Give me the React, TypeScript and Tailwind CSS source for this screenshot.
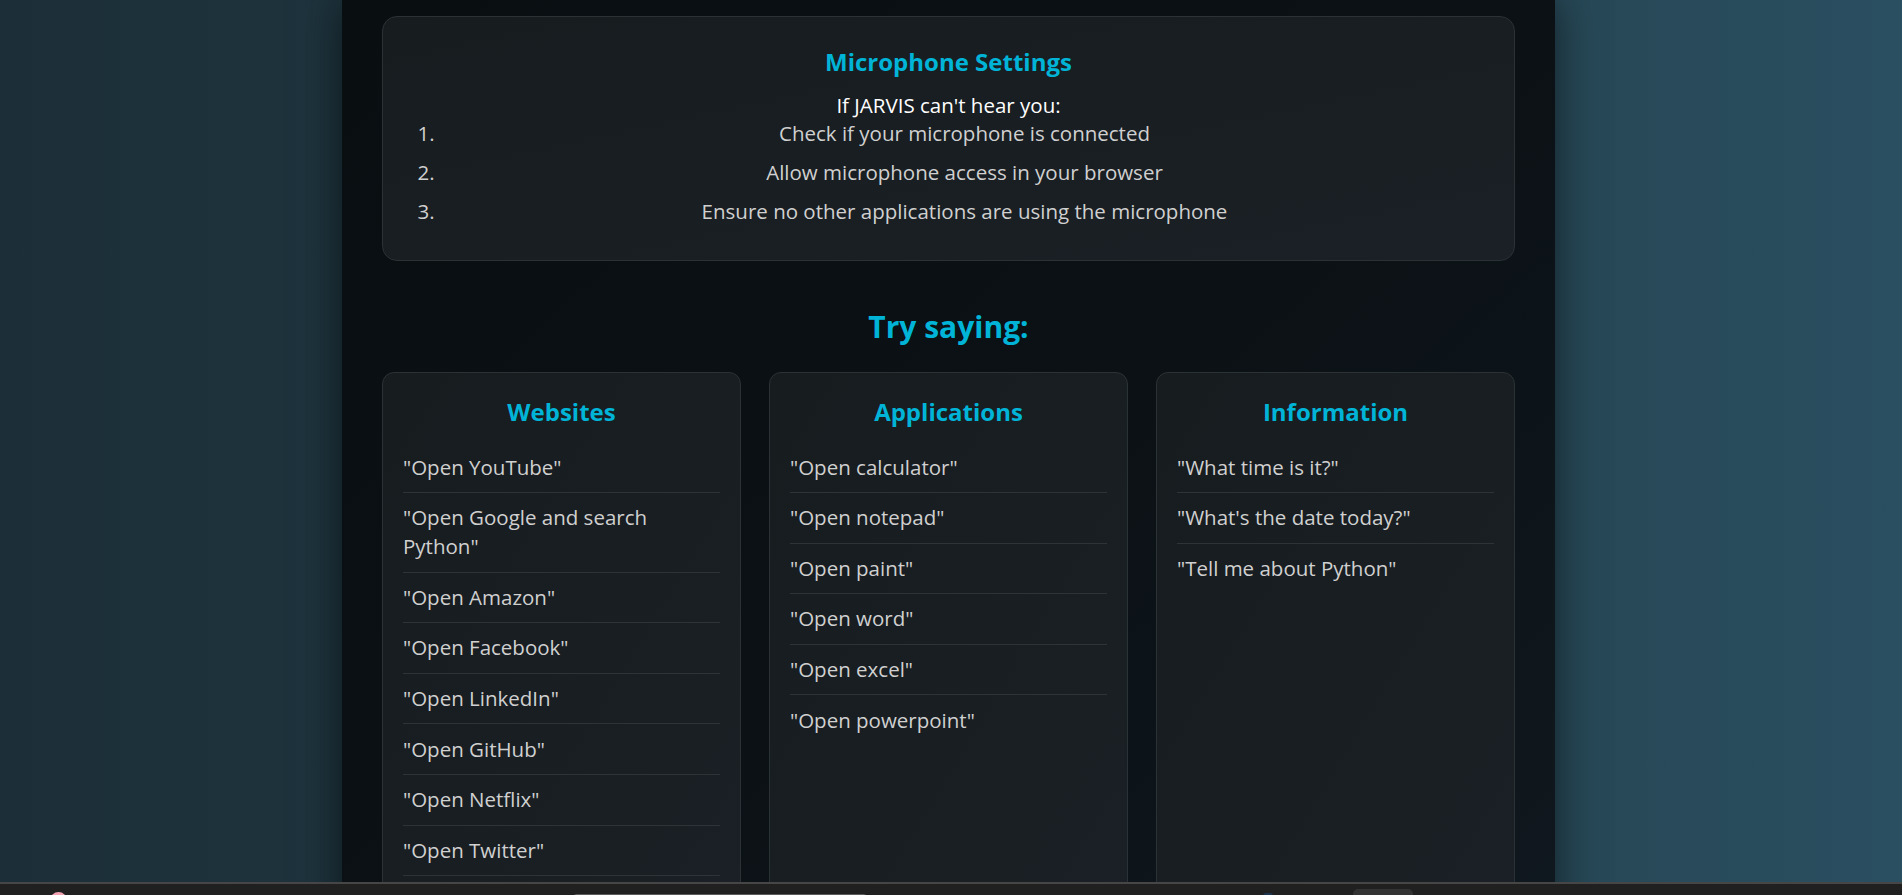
import React from 'react';

const font = { fontFamily: '"Open Sans", "Noto Sans", sans-serif' };

const groups = [
  {
    title: 'Websites',
    more: true,
    items: [
      '"Open YouTube"',
      '"Open Google and search Python"',
      '"Open Amazon"',
      '"Open Facebook"',
      '"Open LinkedIn"',
      '"Open GitHub"',
      '"Open Netflix"',
      '"Open Twitter"',
    ],
  },
  {
    title: 'Applications',
    more: false,
    items: [
      '"Open calculator"',
      '"Open notepad"',
      '"Open paint"',
      '"Open word"',
      '"Open excel"',
      '"Open powerpoint"',
    ],
  },
  {
    title: 'Information',
    more: false,
    items: ['"What time is it?"', '"What\'s the date today?"', '"Tell me about Python"'],
  },
];

const steps = [
  'Check if your microphone is connected',
  'Allow microphone access in your browser',
  'Ensure no other applications are using the microphone',
];

function CommandCard({ title, items, more }: { title: string; items: string[]; more: boolean }) {
  return (
    <div className="rounded-[12px] border border-[#2b3236] bg-gradient-to-br from-[#171c1f] to-[#1a2025] px-[20px] pt-[21px] pb-[20px]">
      <h3 className="text-center text-[24px] font-bold leading-[36px] text-[#00b4d8] mb-[12px]">{title}</h3>
      <ul>
        {items.map((item, i) => (
          <li
            key={item}
            className={
              'py-[10.3px] text-[20.5px] leading-[29px] text-[#d0d0d0] ' +
              (more || i < items.length - 1 ? 'border-b border-[#2d3337]' : '')
            }
          >
            {item}
          </li>
        ))}
      </ul>
      {more && <div className="h-[60px]" />}
    </div>
  );
}

export default function App() {
  return (
    <div
      className="relative h-screen w-full overflow-hidden bg-gradient-to-r from-[#1c2f38] via-[#213a45] to-[#2a4f60]"
      style={font}
    >
      {/* main panel */}
      <div className="ml-[342px] min-h-[1100px] w-[1213px] bg-gradient-to-br from-[#090e11] via-[#0b1115] to-[#111a21] px-[40px] pt-[16px] shadow-[0_0_40px_rgba(0,0,0,0.55)]">
        {/* mic settings */}
        <div className="rounded-[15px] border border-[#2b3236] bg-gradient-to-br from-[#171c1f] to-[#1a2025] px-[25px] pt-[25px] pb-[25px]">
          <h3 className="text-center text-[24px] font-bold leading-[40px] text-[#00b4d8] mb-[9px]">
            Microphone Settings
          </h3>
          <p className="text-center text-[20.5px] leading-[28px] text-white">If JARVIS can't hear you:</p>
          <ol className="list-decimal pl-[32px]">
            {steps.map((s) => (
              <li key={s} className="mb-[10px] text-center text-[20.5px] leading-[28.8px] text-[#d0d0d0] marker:text-[#d0d0d0]">
                {s}
              </li>
            ))}
          </ol>
        </div>

        <h2 className="mt-[46px] mb-[25px] text-center text-[30px] font-bold leading-[40px] text-[#00b4d8]">
          Try saying:
        </h2>

        <div className="grid grid-cols-3 gap-[28px]">
          {groups.map((g) => (
            <CommandCard key={g.title} title={g.title} items={g.items} more={g.more} />
          ))}
        </div>
      </div>

      {/* taskbar */}
      <div className="fixed bottom-0 left-0 flex h-[13px] w-full items-start overflow-hidden border-t-2 border-[#464646] bg-[#202020]">
        <div className="ml-[50px] mt-[8px] h-[17px] w-[17px] rounded-full bg-[#f4a3b3]" />
        <div className="ml-[506px] mt-[10px] h-[6px] w-[294px] rounded-t-[4px] bg-[#5c5c5c]" />
        <div className="ml-[396px] mt-[9px] h-[6px] w-[10px] rounded-full bg-[#1d3550]" />
        <div className="ml-[80px] mt-[5px] h-[10px] w-[60px] rounded-t-[5px] bg-[#333333]" />
      </div>
    </div>
  );
}
